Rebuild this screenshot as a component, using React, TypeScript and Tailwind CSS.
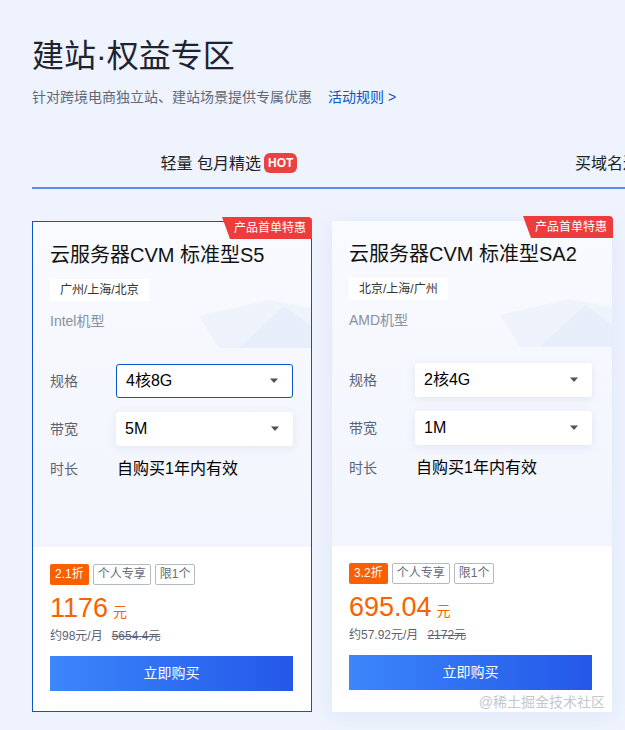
const font = { fontFamily: '"Liberation Sans", "Noto Sans CJK SC", sans-serif' };

type Plan = {
  name: string;
  region: string;
  cpu: string;
  spec: string;
  bw: string;
  discount: string;
  price: string;
  monthly: string;
  original: string;
  active?: boolean;
};

const plans: Plan[] = [
  {
    name: "云服务器CVM 标准型S5",
    region: "广州/上海/北京",
    cpu: "Intel机型",
    spec: "4核8G",
    bw: "5M",
    discount: "2.1折",
    price: "1176",
    monthly: "约98元/月",
    original: "5654.4元",
    active: true,
  },
  {
    name: "云服务器CVM 标准型SA2",
    region: "北京/上海/广州",
    cpu: "AMD机型",
    spec: "2核4G",
    bw: "1M",
    discount: "3.2折",
    price: "695.04",
    monthly: "约57.92元/月",
    original: "2172元",
  },
];

const Caret = () => (
  <svg width="10" height="6" viewBox="0 0 10 6" className="shrink-0">
    <path d="M1 0.5h8L5 5z" fill="#4b5160" />
  </svg>
);

const Select = ({ value, active }: { value: string; active?: boolean }) => (
  <div
    className={
      "flex h-[34px] w-[177px] items-center justify-between rounded-[3px] bg-white pl-[9px] pr-[13px] text-[16px] text-black " +
      (active
        ? "border border-[#0a56c9]"
        : "shadow-[0_2px_8px_rgba(170,185,215,0.25)]")
    }
  >
    <span>{value}</span>
    <Caret />
  </div>
);

const Card = ({ p }: { p: Plan }) => (
  <div
    className={
      "relative flex h-[491px] w-[280px] shrink-0 flex-col bg-white " +
      (p.active
        ? "border border-[#0a56c9]"
        : "shadow-[0_4px_20px_rgba(160,180,220,0.2)]")
    }
  >
    <div className="absolute right-[-1px] top-[-5px] z-10 flex h-[22px] w-[90px] items-center justify-center rounded-tr-[4px] bg-[#ee3b3b] pl-[6px] text-[12px] text-white [clip-path:polygon(0_0,100%_0,100%_100%,8px_100%)]">
      产品首单特惠
    </div>
    <div className="relative flex h-[325px] flex-col overflow-hidden bg-gradient-to-b from-[#f8fafe] to-[#f2f5fd] px-[17px]">
      <svg
        className="absolute right-0 top-[78px]"
        width="112"
        height="48"
        viewBox="0 0 112 48"
      >
        <path d="M0 16 L70 0 L112 8 L112 48 L20 48 Z" fill="#e9eefa" opacity="0.6" />
        <path d="M40 48 L85 6 L112 26 L112 48 Z" fill="#e2e9f8" opacity="0.5" />
      </svg>
      <div className="relative mt-[20px] text-[20px] leading-[26px] text-[#111]">{p.name}</div>
      <div className="relative mt-[11px] flex">
        <span className="bg-white px-[10px] text-[12px] leading-[22px] text-[#333]">
          {p.region}
        </span>
      </div>
      <div className="relative mt-[10px] text-[14px] leading-[20px] text-[#8a909c]">{p.cpu}</div>
      <div className="relative mt-[33px] flex items-center">
        <span className="w-[66px] text-[14px] text-[#5d6370]">规格</span>
        <Select value={p.spec} active={p.active} />
      </div>
      <div className="relative mt-[14px] flex items-center">
        <span className="w-[66px] text-[14px] text-[#5d6370]">带宽</span>
        <Select value={p.bw} />
      </div>
      <div className="relative mt-[12px] flex items-center">
        <span className="w-[67px] text-[14px] text-[#5d6370]">时长</span>
        <span className="text-[16px] leading-[22px] text-black">自购买1年内有效</span>
      </div>
    </div>
    <div className="flex flex-col px-[17px] pt-[17px]">
      <div className="flex gap-[4px] text-[12px] leading-[19px]">
        <span className="rounded-[2px] bg-[#fa5f00] px-[5px] py-px text-white">{p.discount}</span>
        <span className="rounded-[2px] border border-[#b5b9c2] px-[4px] text-[#666b76]">个人专享</span>
        <span className="rounded-[2px] border border-[#b5b9c2] px-[4px] text-[#666b76]">限1个</span>
      </div>
      <div className="mt-[6px] flex items-baseline text-[#f86200]">
        <span className="text-[27px] leading-[34px]">{p.price}</span>
        <span className="ml-[5px] text-[14px]">元</span>
      </div>
      <div className="mt-[2px] flex text-[12px] leading-[18px] text-[#5d6370]">
        <span>{p.monthly}</span>
        <span className="ml-[9px] line-through">{p.original}</span>
      </div>
      <button className="mt-[11px] flex h-[35px] w-[243px] items-center justify-center bg-gradient-to-r from-[#3d86fb] to-[#2557e9] text-[14px] text-white">
        立即购买
      </button>
    </div>
  </div>
);

export default function App() {
  return (
    <div
      className="relative h-[730px] w-[625px] overflow-hidden bg-[#eef3fd] pl-[32px]"
      style={font}
    >
      <h1 className="pt-[36px] text-[32px] leading-[40px] text-[#1d2331]">建站·权益专区</h1>
      <div className="mt-[10px] flex text-[14px] leading-[22px]">
        <span className="text-[#626877]">针对跨境电商独立站、建站场景提供专属优惠</span>
        <span className="ml-[16px] text-[#0a56c9]">活动规则 &gt;</span>
      </div>
      <div className="mt-[45px] flex w-[800px] border-b-2 border-[#5b8ef0]">
        <div className="flex h-[34px] w-[394px] items-start justify-center gap-[3px]">
          <span className="text-[16px] leading-[22px] text-[#222]">轻量 包月精选</span>
          <span className="rounded-[6px] bg-[#ec4141] px-[4px] text-[12px] font-bold leading-[20px] text-white">
            HOT
          </span>
        </div>
        <div className="flex h-[34px] w-[394px] items-start justify-center">
          <span className="text-[16px] leading-[22px] text-[#222]">买域名送建站</span>
        </div>
      </div>
      <div className="mt-[32px] flex gap-[20px]">
        {plans.map((p) => (
          <Card key={p.name} p={p} />
        ))}
      </div>
      <div className="absolute bottom-[17px] right-[20px] text-[14px] text-[#c3c7cf]">
        @稀土掘金技术社区
      </div>
    </div>
  );
}
